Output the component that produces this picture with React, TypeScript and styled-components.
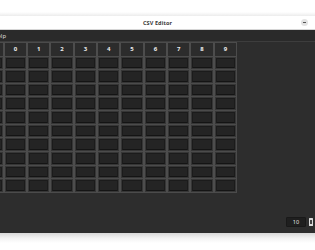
import React from 'react';
import styled, { createGlobalStyle } from 'styled-components';

const GlobalStyle = createGlobalStyle`
	html, body {
		margin: 0;
		padding: 0;
		background: #ffffff;
	}
	#root {
		width: 315px;
		height: 250px;
		overflow: hidden;
	}
`;

const COLS = 10;
const ROWS = 10;

const Page = styled.div`
	width: 315px;
	height: 250px;
	display: flex;
	flex-direction: column;
	background: #ffffff;
	font-family: 'Noto Sans', 'DejaVu Sans', sans-serif;
	overflow: hidden;
`;

const Desktop = styled.div`
	height: 16px;
	flex: none;
	background: linear-gradient(to bottom, #ffffff 0%, #ffffff 75%, #ececec 100%);
`;

const HeaderBar = styled.div`
	height: 13px;
	flex: none;
	display: flex;
	align-items: center;
	justify-content: center;
	position: relative;
	background: #ffffff;
	border-bottom: 0.5px solid #d6d6d6;
`;

const Title = styled.span`
	font-size: 5.5px;
	font-weight: 700;
	color: #3a3a3a;
	letter-spacing: 0.1px;
`;

const RoundButton = styled.div`
	position: absolute;
	right: 7px;
	top: 3px;
	width: 7px;
	height: 7px;
	border-radius: 50%;
	background: #e3e3e3;
	display: flex;
	align-items: center;
	justify-content: center;

	&::after {
		content: '';
		width: 3px;
		height: 1px;
		background: #555555;
	}
`;

const Body = styled.div`
	height: 203px;
	flex: none;
	display: flex;
	flex-direction: column;
	background: #2d2d2d;
`;

const MenuBar = styled.div`
	height: 11px;
	flex: none;
	display: flex;
	align-items: center;
	background: #2a2a2a;
	border-bottom: 1px solid #3d3d3d;
	overflow: hidden;
`;

const MenuItem = styled.span`
	margin-left: -7px;
	font-size: 6px;
	color: #dcdcdc;
`;

const Grid = styled.div`
	display: grid;
	grid-template-columns: repeat(${COLS + 1}, 23.33px);
	grid-template-rows: 13.5px repeat(${ROWS}, 13.65px);
	margin-left: -20.6px;
	width: max-content;
	border-right: 1.5px solid #4b4b4b;
	border-bottom: 1.5px solid #4b4b4b;
	flex: none;
`;

const Cell = styled.div<{ $head?: boolean }>`
	box-sizing: border-box;
	border-left: 2px solid #4d4d4d;
	border-top: 1.5px solid #4b4b4b;
	background: ${(p) => (p.$head ? '#2c2c2c' : '#363636')};
	padding: ${(p) => (p.$head ? '0' : '1px')};
	display: flex;
	align-items: center;
	justify-content: center;
`;

const Entry = styled.div`
	box-sizing: border-box;
	width: 100%;
	height: 100%;
	background: #242424;
	border: 1px solid #1b1b1b;
	border-bottom-color: #141414;
	border-radius: 1px;
`;

const HeadLabel = styled.span`
	font-size: 6px;
	font-weight: 700;
	color: #ececec;
`;

const Filler = styled.div`
	flex: 1;
`;

const Footer = styled.div`
	height: 14px;
	flex: none;
	display: flex;
	align-items: center;
	justify-content: flex-end;
	gap: 2.5px;
	padding-bottom: 4px;
	margin-right: -4px;
`;

const CountEntry = styled.div`
	width: 20px;
	height: 10px;
	box-sizing: border-box;
	background: #1f1f1f;
	border: 0.5px solid #191919;
	border-radius: 1px;
	display: flex;
	align-items: center;
	justify-content: center;
	font-size: 5.5px;
	color: #e8e8e8;
`;

const SmallButton = styled.div<{ $dark?: boolean }>`
	width: 4px;
	height: 8px;
	box-sizing: border-box;
	border-radius: 0.5px;
	background: ${(p) => (p.$dark ? '#3a3a3a' : '#d9d9d9')};
	display: flex;
	align-items: center;
	justify-content: center;

	&::after {
		content: '';
		width: 2px;
		height: 4px;
		background: ${(p) => (p.$dark ? '#2a2a2a' : '#444444')};
	}
`;

const BottomShadow = styled.div`
	flex: 1;
	background: linear-gradient(to bottom, #d8d8d8 0px, #f2f2f2 5px, #ffffff 10px);
`;

const App = (): JSX.Element => {
	const headers = Array.from({ length: COLS + 1 }, (_, i) => (i === 0 ? '' : String(i - 1)));
	const rows = Array.from({ length: ROWS }, (_, r) => r);

	return (
		<>
			<GlobalStyle />
			<Page>
				<Desktop />
				<HeaderBar>
					<Title>CSV Editor</Title>
					<RoundButton />
				</HeaderBar>
				<Body>
					<MenuBar>
						<MenuItem>Help</MenuItem>
					</MenuBar>
					<Grid>
						{headers.map((h, i) => (
							<Cell key={`h${i}`} $head>
								<HeadLabel>{h}</HeadLabel>
							</Cell>
						))}
						{rows.map((r) =>
							headers.map((_, c) => (
								<Cell key={`${r}-${c}`}>
									<Entry />
								</Cell>
							)),
						)}
					</Grid>
					<Filler />
					<Footer>
						<CountEntry>10</CountEntry>
						<SmallButton />
						<SmallButton $dark />
					</Footer>
				</Body>
				<BottomShadow />
			</Page>
		</>
	);
};

export default App;
